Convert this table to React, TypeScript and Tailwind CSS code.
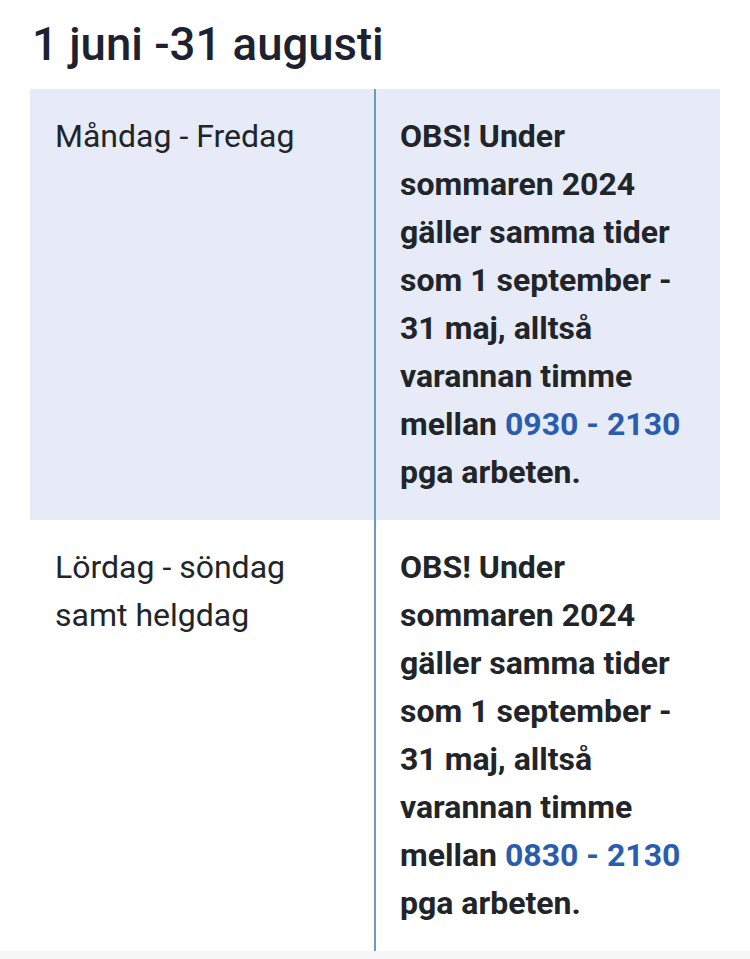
const rows = [
  { day: "Måndag - Fredag", time: "0930 - 2130", shaded: true },
  { day: "Lördag - söndag samt helgdag", time: "0830 - 2130", shaded: false },
];

export default function App() {
  return (
    <div className="min-h-[959px] bg-white font-['Roboto',sans-serif] text-[#212529]">
      <div className="px-[30px] pt-[17px]">
        <h2 className="pl-[2px] text-[45.5px] font-medium leading-[56px] text-[#1d2130]">
          1 juni -31 augusti
        </h2>
        <table className="mt-[16px] w-[690px] table-fixed border-collapse text-[32px] leading-[48px]">
          <tbody>
            {rows.map((r) => (
              <tr key={r.day} className={r.shaded ? "bg-[#e6ebf7]" : "bg-white"}>
                <td className="w-[345px] px-[25px] pt-[23px] pb-[24px] align-top">
                  {r.day}
                </td>
                <td className="w-[345px] border-l-2 border-[#6f9abf] px-[24px] pt-[23px] pb-[24px] align-top font-bold">
                  OBS! Under sommaren 2024 gäller samma tider som 1 september - 31 maj,
                  alltså varannan timme mellan{" "}
                  <span className="text-[#2a5db0]">{r.time}</span> pga arbeten.
                </td>
              </tr>
            ))}
          </tbody>
        </table>
      </div>
      <div className="h-[10px] bg-[#f5f6f8]" />
    </div>
  );
}
